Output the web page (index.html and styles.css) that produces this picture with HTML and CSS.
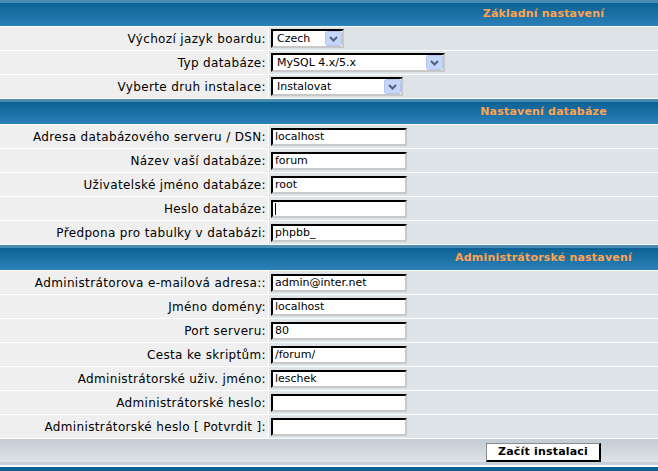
FILE: index.html
```html
<!DOCTYPE html>
<html lang="cs">
<head>
<meta charset="utf-8">
<title>Instalace phpBB</title>
<link rel="stylesheet" href="styles.css">
</head>
<body>
<table class="forumline">
  <colgroup><col class="col-label"><col class="col-field"></colgroup>
  <tr><th colspan="2" class="th th-first">Základní nastavení</th></tr>
  <tr>
    <td class="label">Výchozí jazyk boardu:</td>
    <td class="field"><span class="select"><select class="w-lang"><option>Czech</option></select><svg class="arrow" viewBox="0 0 17 15"><rect x="0.5" y="0.5" width="16" height="14" rx="2" class="arrow-bg"/><path d="M5 6 L8.5 9.5 L12 6" class="arrow-chev"/></svg></span></td>
  </tr>
  <tr>
    <td class="label">Typ databáze:</td>
    <td class="field"><span class="select"><select class="w-db"><option>MySQL 4.x/5.x</option></select><svg class="arrow" viewBox="0 0 17 15"><rect x="0.5" y="0.5" width="16" height="14" rx="2" class="arrow-bg"/><path d="M5 6 L8.5 9.5 L12 6" class="arrow-chev"/></svg></span></td>
  </tr>
  <tr>
    <td class="label">Vyberte druh instalace:</td>
    <td class="field"><span class="select"><select class="w-inst"><option>Instalovat</option></select><svg class="arrow" viewBox="0 0 17 15"><rect x="0.5" y="0.5" width="16" height="14" rx="2" class="arrow-bg"/><path d="M5 6 L8.5 9.5 L12 6" class="arrow-chev"/></svg></span></td>
  </tr>
  <tr><th colspan="2" class="th">Nastavení databáze</th></tr>
  <tr>
    <td class="label">Adresa databázového serveru / DSN:</td>
    <td class="field"><input class="text" type="text" value="localhost"></td>
  </tr>
  <tr>
    <td class="label">Název vaší databáze:</td>
    <td class="field"><input class="text" type="text" value="forum"></td>
  </tr>
  <tr>
    <td class="label">Uživatelské jméno databáze:</td>
    <td class="field"><input class="text" type="text" value="root"></td>
  </tr>
  <tr>
    <td class="label">Heslo databáze:</td>
    <td class="field"><span class="caret-wrap"><input class="text" type="password" value=""><span class="caret"></span></span></td>
  </tr>
  <tr>
    <td class="label">Předpona pro tabulky v databázi:</td>
    <td class="field"><input class="text" type="text" value="phpbb_"></td>
  </tr>
  <tr><th colspan="2" class="th">Administrátorské nastavení</th></tr>
  <tr>
    <td class="label">Administrátorova e-mailová adresa::</td>
    <td class="field"><input class="text" type="text" value="admin@inter.net"></td>
  </tr>
  <tr>
    <td class="label">Jméno domény:</td>
    <td class="field"><input class="text" type="text" value="localhost"></td>
  </tr>
  <tr>
    <td class="label">Port serveru:</td>
    <td class="field"><input class="text" type="text" value="80"></td>
  </tr>
  <tr>
    <td class="label">Cesta ke skriptům:</td>
    <td class="field"><input class="text" type="text" value="/forum/"></td>
  </tr>
  <tr>
    <td class="label">Administrátorské uživ. jméno:</td>
    <td class="field"><input class="text" type="text" value="leschek"></td>
  </tr>
  <tr>
    <td class="label">Administrátorské heslo:</td>
    <td class="field"><input class="text" type="password" value=""></td>
  </tr>
  <tr>
    <td class="label">Administrátorské heslo [ Potvrdit ]:</td>
    <td class="field"><input class="text" type="password" value=""></td>
  </tr>
  <tr>
    <td colspan="2" class="cat-bottom"><button class="btn" type="button">Začít instalaci</button></td>
  </tr>
</table>
<div class="tail"></div>
</body>
</html>
```
FILE: styles.css
```css
html, body {
  margin: 0;
  padding: 0;
  background: #ffffff;
  overflow: hidden;
}

body {
  font-family: "DejaVu Sans", Verdana, sans-serif;
  font-size: 11px;
  color: #000000;
}

.forumline {
  width: 661px;
  table-layout: fixed;
  border-collapse: separate;
  border-spacing: 1px;
  margin: -1px 0 0 -1px;
}

.col-label { width: 268px; }
.col-field { width: 390px; }

.th {
  height: 25px;
  padding: 0 0 0 428px;
  text-align: center;
  white-space: nowrap;
  color: #ffa34f;
  font-weight: bold;
  font-size: 11px;
  letter-spacing: 0.2px;
  background: linear-gradient(to bottom, #4a8bb3 0, #4a8bb3 3px, #0c6194 3px, #2b81b8 100%);
}

.th-first {
  height: 26px;
}

.label {
  height: 23px;
  padding: 0 2px 0 0;
  background: #efefef;
  text-align: right;
  white-space: nowrap;
  font-size: 12px;
  letter-spacing: 0.35px;
}

.field {
  height: 23px;
  padding: 0 0 0 2px;
  background: #dee3e7;
}

.text {
  box-sizing: border-box;
  width: 136px;
  height: 18px;
  margin: 0;
  padding: 0 2px;
  border: 2px solid;
  border-color: #000000 #c8c8c8 #c8c8c8 #000000;
  background: #ffffff;
  font-family: "DejaVu Sans", Verdana, sans-serif;
  font-size: 11px;
  color: #000000;
  vertical-align: middle;
  outline: none;
}

.caret-wrap {
  position: relative;
  display: inline-block;
  vertical-align: middle;
}

.caret-wrap .text {
  display: block;
}

.caret {
  position: absolute;
  left: 4px;
  top: 3px;
  width: 1px;
  height: 12px;
  background: #000000;
}

.select {
  position: relative;
  display: inline-block;
  vertical-align: middle;
}

.select select {
  display: block;
  box-sizing: border-box;
  -webkit-appearance: none;
  appearance: none;
  height: 19px;
  margin: 0;
  padding: 0 0 0 4px;
  border: 2px solid;
  border-color: #000000 #c8c8c8 #c8c8c8 #000000;
  border-radius: 0;
  background: #ffffff;
  font-family: "DejaVu Sans", Verdana, sans-serif;
  font-size: 11px;
  color: #000000;
  outline: none;
}

.w-lang { width: 73px; }
.w-db { width: 174px; }
.w-inst { width: 132px; }

.arrow {
  position: absolute;
  right: 2px;
  top: 2px;
  width: 17px;
  height: 15px;
  pointer-events: none;
}

.arrow-bg {
  fill: #c6d6f8;
  stroke: #b3c5ef;
  stroke-width: 1;
}

.arrow-chev {
  fill: none;
  stroke: #4d6185;
  stroke-width: 2;
}

.cat-bottom {
  height: 26px;
  padding: 0 0 0 428px;
  text-align: center;
  background: linear-gradient(to bottom, #c3cbd3 0, #dfe3e7 88%, #c9cfd6 88%, #c9cfd6 100%);
}

.btn {
  box-sizing: border-box;
  width: 115px;
  height: 19px;
  margin: 0;
  padding: 0;
  border-style: solid;
  border-width: 1px 2px 2px 1px;
  border-color: #8a8a8a #000000 #000000 #8a8a8a;
  background: #ffffff;
  font-family: "DejaVu Sans", Verdana, sans-serif;
  font-size: 11px;
  font-weight: bold;
  letter-spacing: 0.2px;
  color: #000000;
  vertical-align: middle;
}

.tail {
  height: 8px;
  margin-top: 1px;
  background: #0d6295;
}
```
